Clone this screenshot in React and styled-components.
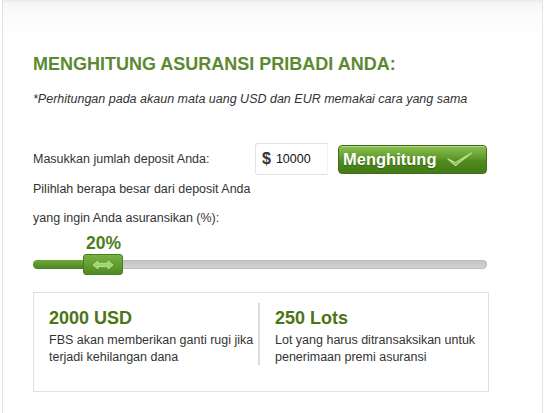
import React from "react";
import styled, { createGlobalStyle } from "styled-components";

const Global = createGlobalStyle`
  html, body { margin: 0; padding: 0; background: #fff; }
  body { font-family: "Liberation Sans", Arial, sans-serif; }
`;

const Page = styled.div`
  margin: 0 1px 0 2px;
  height: 413px;
  box-sizing: border-box;
  border-left: 1px solid #e2e2e2;
  border-right: 1px solid #e2e2e2;
  background: linear-gradient(to bottom, #e9e9e9 0px, #f6f6f6 3px, #fbfbfb 14px, #ffffff 36px);
  padding: 54px 0 0 30px;
  color: #333;
`;

const Title = styled.h2`
  margin: 0;
  font-size: 18px;
  font-weight: bold;
  color: #5c8a32;
`;

const Note = styled.p`
  margin: 17px 0 0;
  font-size: 12.5px;
  font-style: italic;
  color: #333;
`;

const Form = styled.div`
  margin-top: 37px;
  display: flex;
  flex-direction: column;
`;

const Row = styled.div`
  display: flex;
  align-items: center;
  height: 32px;
`;

const Label = styled.div`
  font-size: 12.5px;
  color: #333;
  width: ${(p) => p.$w || "auto"};
  line-height: 29px;
`;

const Amount = styled.div`
  width: 73px;
  height: 32px;
  box-sizing: border-box;
  border: 1px solid #e2e2e2;
  border-right-color: #f4f4f4;
  border-radius: 3px 0 0 3px;
  display: flex;
  align-items: center;
  padding-left: 6px;
  gap: 5px;
`;

const Dollar = styled.span`
  font-size: 16px;
  font-weight: bold;
  color: #333;
`;

const Value = styled.span`
  font-size: 12.5px;
  color: #111;
`;

const Button = styled.button`
  margin-left: 10px;
  width: 149px;
  height: 29px;
  box-sizing: border-box;
  border: 1px solid #3d6e16;
  border-radius: 4px;
  background: linear-gradient(to bottom, #8bc151 0%, #5f9a2c 45%, #4f8a1e 55%, #437b16 100%);
  box-shadow: inset 0 1px 0 rgba(255,255,255,0.35);
  display: flex;
  align-items: center;
  padding: 0 0 0 4px;
  gap: 11px;
  font-family: "Liberation Sans", Arial, sans-serif;
  font-size: 16.5px;
  font-weight: bold;
  color: #fff;
  text-shadow: 0 1px 1px rgba(40,70,10,0.6);
  cursor: pointer;
`;

const Percent = styled.div`
  margin: 0 0 0 53px;
  font-size: 17.5px;
  font-weight: bold;
  color: #4c7d1c;
`;

const Slider = styled.div`
  position: relative;
  margin-top: 6px;
  width: 454px;
  height: 9px;
  border-radius: 5px;
  background: linear-gradient(to bottom, #c4c4c4, #d2d2d2);
  box-shadow: inset 0 0 0 1px #bdbdbd;
`;

const Fill = styled.div`
  height: 100%;
  border-radius: 5px 0 0 5px;
  background: linear-gradient(to bottom, #6fa83a, #4c8420);
`;

const Handle = styled.div`
  position: absolute;
  top: -6px;
  width: 40px;
  height: 21px;
  box-sizing: border-box;
  border: 1px solid #4a7f1f;
  border-radius: 3px;
  background: linear-gradient(to bottom, #78b042, #4f8a22);
  display: flex;
  align-items: center;
  justify-content: center;
`;

const Result = styled.div`
  margin-top: 23px;
  width: 456px;
  height: 100px;
  box-sizing: border-box;
  border: 1px solid #e0e0e0;
  display: grid;
  grid-template-columns: 226px 1fr;
  padding: 10px 0 0 0;
`;

const Cell = styled.div`
  padding: 5px 0 0 15px;
  height: 62px;
  box-sizing: border-box;
  ${(p) => (p.$divider ? "border-right: 2px solid #dcdcdc;" : "")}
`;

const Big = styled.div`
  font-size: 18px;
  font-weight: bold;
  color: #4c7414;
`;

const Desc = styled.div`
  margin-top: 3px;
  font-size: 12.5px;
  line-height: 17px;
  color: #333;
`;

const Check = () => (
  <svg width="26" height="17" viewBox="0 0 26 17">
    <path d="M1 8 L8.5 14.5 L24.5 2 L8.5 11.5 Z" fill="#79b64a" stroke="#b9e08f" strokeWidth="1.2" strokeLinejoin="round" />
  </svg>
);

const Arrows = () => (
  <svg width="22" height="10" viewBox="0 0 22 10">
    <path d="M1 5 L6 1 L6 3.3 L16 3.3 L16 1 L21 5 L16 9 L16 6.7 L6 6.7 L6 9 Z" fill="#9fd26c" stroke="#c4eb98" strokeWidth="0.8" strokeLinejoin="round" />
  </svg>
);

export default function App() {
  const pct = 20;
  return (
    <>
      <Global />
      <Page>
        <Title>MENGHITUNG ASURANSI PRIBADI ANDA:</Title>
        <Note>*Perhitungan pada akaun mata uang USD dan EUR memakai cara yang sama</Note>
        <Form>
          <Row>
            <Label $w="222px">Masukkan jumlah deposit Anda:</Label>
            <Amount>
              <Dollar>$</Dollar>
              <Value>10000</Value>
            </Amount>
            <Button>
              Menghitung
              <Check />
            </Button>
          </Row>
          <Label>Pilihlah berapa besar dari deposit Anda</Label>
          <Label>yang ingin Anda asuransikan (%):</Label>
        </Form>
        <Percent>{pct}%</Percent>
        <Slider>
          <Fill style={{ width: "52px" }} />
          <Handle style={{ left: "50px" }}>
            <Arrows />
          </Handle>
        </Slider>
        <Result>
          <Cell $divider>
            <Big>2000 USD</Big>
            <Desc>FBS akan memberikan ganti rugi jika<br />terjadi kehilangan dana</Desc>
          </Cell>
          <Cell>
            <Big>250 Lots</Big>
            <Desc>Lot yang harus ditransaksikan untuk<br />penerimaan premi asuransi</Desc>
          </Cell>
        </Result>
      </Page>
    </>
  );
}
